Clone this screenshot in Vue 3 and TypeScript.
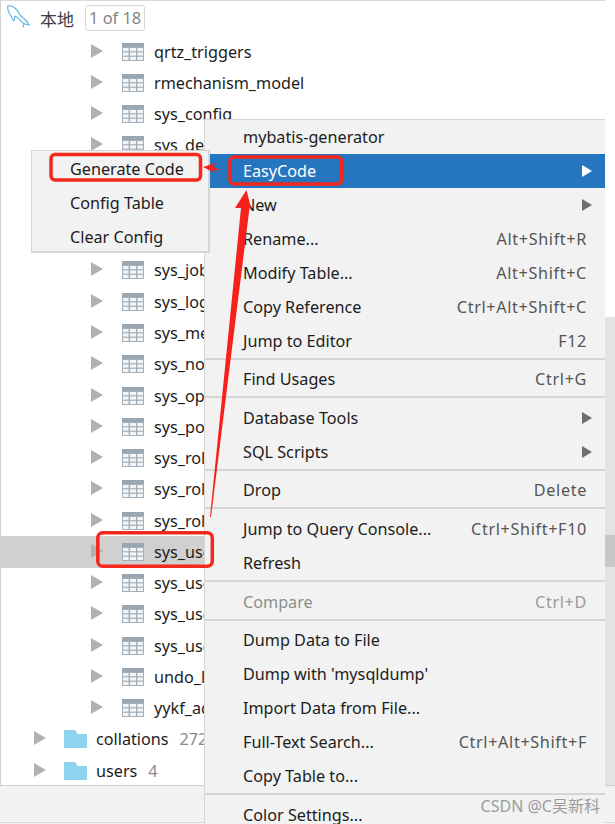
<script setup lang="ts">
const tables: string[] = [
  'qrtz_triggers', 'rmechanism_model', 'sys_config', 'sys_dept', 'sys_dict_data', 'sys_dict_type', 'sys_gen',
  'sys_job', 'sys_logininfor', 'sys_menu', 'sys_notice', 'sys_oper_log', 'sys_post', 'sys_role', 'sys_role_dept',
  'sys_role_menu', 'sys_user', 'sys_user_online', 'sys_user_post', 'sys_user_role', 'undo_log', 'yykf_admin'
]
const folders = [
  { name: 'collations', count: '272' },
  { name: 'users', count: '4' }
]
type Item = { label: string; key?: string; arrow?: boolean; active?: boolean; disabled?: boolean }
const groups: Item[][] = [
  [
    { label: 'mybatis-generator' },
    { label: 'EasyCode', arrow: true, active: true },
    { label: 'New', arrow: true },
    { label: 'Rename...', key: 'Alt+Shift+R' },
    { label: 'Modify Table...', key: 'Alt+Shift+C' },
    { label: 'Copy Reference', key: 'Ctrl+Alt+Shift+C' },
    { label: 'Jump to Editor', key: 'F12' }
  ],
  [{ label: 'Find Usages', key: 'Ctrl+G' }],
  [{ label: 'Database Tools', arrow: true }, { label: 'SQL Scripts', arrow: true }],
  [{ label: 'Drop', key: 'Delete' }],
  [{ label: 'Jump to Query Console...', key: 'Ctrl+Shift+F10' }, { label: 'Refresh' }],
  [{ label: 'Compare', key: 'Ctrl+D', disabled: true }],
  [
    { label: 'Dump Data to File' },
    { label: "Dump with 'mysqldump'" },
    { label: 'Import Data from File...' },
    { label: 'Full-Text Search...', key: 'Ctrl+Alt+Shift+F' },
    { label: 'Copy Table to...' }
  ],
  [{ label: 'Color Settings...' }]
]
const submenu: string[] = ['Generate Code', 'Config Table', 'Clear Config']
</script>

<template>
  <div class="page">
    <div class="main">
      <div class="tree">
        <div class="head">
          <svg class="dolphin" width="24" height="24" viewBox="0 0 24 24" fill="none" stroke="#5db3e2" stroke-width="1.1" stroke-linejoin="round" stroke-linecap="round">
            <path d="M1 1C4 0 7 2 9 4C11 6 12 9 14 11C16 13 19 14 22 20" />
            <path d="M1 1C0 4 2 8 4 11C5 13 6 15 7 16L8 11C10 12 12 14 14 16C15 18 17 18 18 19L22 20" />
            <path d="M17 19L16 22" />
          </svg>
          <span class="root">本地</span>
          <span class="pager">1 of 18</span>
        </div>
        <div v-for="t in tables" :key="t" class="row table-row" :class="{ selected: t === 'sys_user' }">
          <svg class="caret" width="12" height="14" viewBox="0 0 12 14"><path d="M0 0L12 7L0 14Z" fill="#b1b1b1" /></svg>
          <svg class="grid-ic" width="22" height="18" viewBox="0 0 22 18">
            <rect width="22" height="18" fill="#a3afb9" />
            <rect y="0" width="22" height="4" fill="#9aa7b2" />
            <g fill="#f2f4f5">
              <rect x="1" y="5" width="5.6" height="3.2" /><rect x="8" y="5" width="6" height="3.2" /><rect x="15.4" y="5" width="5.6" height="3.2" />
              <rect x="1" y="9.4" width="5.6" height="3.2" /><rect x="8" y="9.4" width="6" height="3.2" /><rect x="15.4" y="9.4" width="5.6" height="3.2" />
              <rect x="1" y="13.8" width="5.6" height="3.2" /><rect x="8" y="13.8" width="6" height="3.2" /><rect x="15.4" y="13.8" width="5.6" height="3.2" />
            </g>
          </svg>
          <span class="name">{{ t }}</span>
        </div>
        <div v-for="f in folders" :key="f.name" class="row folder-row">
          <svg class="caret" width="12" height="14" viewBox="0 0 12 14"><path d="M0 0L12 7L0 14Z" fill="#b1b1b1" /></svg>
          <svg class="folder-ic" width="23" height="18" viewBox="0 0 23 18"><path d="M0 0H11L14 4H23V18H0Z" fill="#8fd4ee" /></svg>
          <span class="name">{{ f.name }}</span>
          <span class="count">{{ f.count }}</span>
        </div>
      </div>
      <aside class="scroll"><div class="thumb"></div></aside>
    </div>
    <div class="status"></div>

    <div class="menu">
      <template v-for="(g, i) in groups" :key="i">
        <div v-if="i > 0" class="sep"></div>
        <div v-for="it in g" :key="it.label" class="item" :class="{ active: it.active, disabled: it.disabled }">
          <span>{{ it.label }}</span>
          <span v-if="it.key" class="shortcut">{{ it.key }}</span>
          <svg v-if="it.arrow" class="more" width="10" height="12" viewBox="0 0 10 12"><path d="M0 0L10 6L0 12Z" /></svg>
        </div>
      </template>
    </div>

    <div class="submenu">
      <div v-for="s in submenu" :key="s" class="sub-item">{{ s }}</div>
    </div>

    <svg class="marks" width="615" height="824" viewBox="0 0 615 824" fill="none">
      <rect x="51" y="154.500" width="149.500" height="25.500" rx="4" stroke="#f5261b" stroke-width="3.500" />
      <rect x="230" y="157" width="111.500" height="27" rx="4" stroke="#f5261b" stroke-width="3.500" />
      <rect x="97.800" y="532.800" width="114.500" height="33.500" rx="5" stroke="#f5261b" stroke-width="3.500" />
      <path d="M246.500 190L251.500 210L249.500 208L211 517L210 517L241 208L235 208Z" fill="#f5211a" />
      <path d="M203 167L215 163L213.500 167L221 170L213 170L215 173Z" fill="#f5211a" />
    </svg>

    <div class="watermark">CSDN @C吴新科</div>
  </div>
</template>

<style scoped>
.page {
  position: relative;
  width: 615px;
  height: 824px;
  overflow: hidden;
  background: #f2f2f2;
  font-family: "Noto Sans", "Noto Sans CJK SC", sans-serif;
  font-size: 16.2px;
  color: #1c1c1c;
}
.main {
  display: flex;
  height: 786px;
  box-sizing: border-box;
  border-bottom: 1px solid #cfcfcf;
  background: #fff;
}
.tree {
  flex: 1;
  min-width: 0;
  border-left: 1px solid #d4d4d4;
  border-top: 1px solid #d9d9d9;
}
.head {
  display: flex;
  align-items: center;
  height: 35px;
  padding-left: 6px;
}
.dolphin { flex: none; margin-top: -4px; }
.root { margin-left: 9px; color: #3c3c3c; font-size: 17px; margin-top: -1px; }
.pager {
  margin-left: 11px;
  padding: 0 3px;
  height: 24px;
  line-height: 24px;
  border: 1px solid #d6d6d6;
  border-radius: 3px;
  color: #858585;
  font-size: 16.400px;
  margin-top: -2px;
  white-space: nowrap;
}
.row {
  display: flex;
  align-items: center;
  height: 31.27px;
  white-space: nowrap;
}
.table-row { padding-left: 90px; }
.folder-row { padding-left: 33px; }
.selected { background: #d0d0d0; }
.caret { flex: none; margin-top: -2px; }
.grid-ic { flex: none; margin-left: 19px; }
.folder-ic { flex: none; margin-left: 18px; }
.name { margin-left: 10px; }
.folder-row .name { margin-left: 9px; }
.count { margin-left: 11px; color: #8a8a8a; }
.scroll {
  flex: none;
  width: 10px;
  margin-top: 317px;
  background: #e3e3e3;
}
.thumb {
  height: 32px;
  margin-top: 218px;
  background: #c8c8c8;
}
.status {
  height: 36px;
  border-bottom: 1px solid #d4d4d4;
  background: #f2f2f2;
}
.menu {
  position: absolute;
  left: 204px;
  top: 119px;
  width: 401px;
  height: 706px;
  box-sizing: border-box;
  background: #f2f2f2;
  border: 1px solid #d6d6d6;
  border-right: 0;
  border-bottom: 0;
}
.item {
  display: flex;
  align-items: center;
  height: 33.98px;
  padding: 0 18px 0 38px;
  white-space: nowrap;
}
.item > span:first-child { flex: 1; }
.active { background: #2675bf; color: #fff; }
.disabled { color: #8e8e8e; }
.shortcut { color: #555; letter-spacing: 0.65px; }
.disabled .shortcut { color: #9a9a9a; }
.more { fill: #6e6e6e; flex: none; margin-right: -5px; }
.active .more { fill: #fff; }
.sep {
  height: 4.6px;
  box-sizing: border-box;
  border-top: 2px solid #d5d5d5;
}
.submenu {
  position: absolute;
  left: 31px;
  top: 150px;
  width: 179px;
  height: 103px;
  box-sizing: border-box;
  padding-top: 1px;
  background: #f2f2f2;
  border: 1px solid #d6d6d6;
  border-width: 1px 2px 2px 1px;
}
.sub-item {
  display: flex;
  align-items: center;
  height: 34px;
  padding-left: 38px;
  white-space: nowrap;
}
.marks {
  position: absolute;
  left: 0;
  top: 0;
  pointer-events: none;
}
.watermark {
  position: absolute;
  right: 15px;
  bottom: 7px;
  font-size: 16px;
  color: #9c9c9c;
  white-space: nowrap;
}
</style>
